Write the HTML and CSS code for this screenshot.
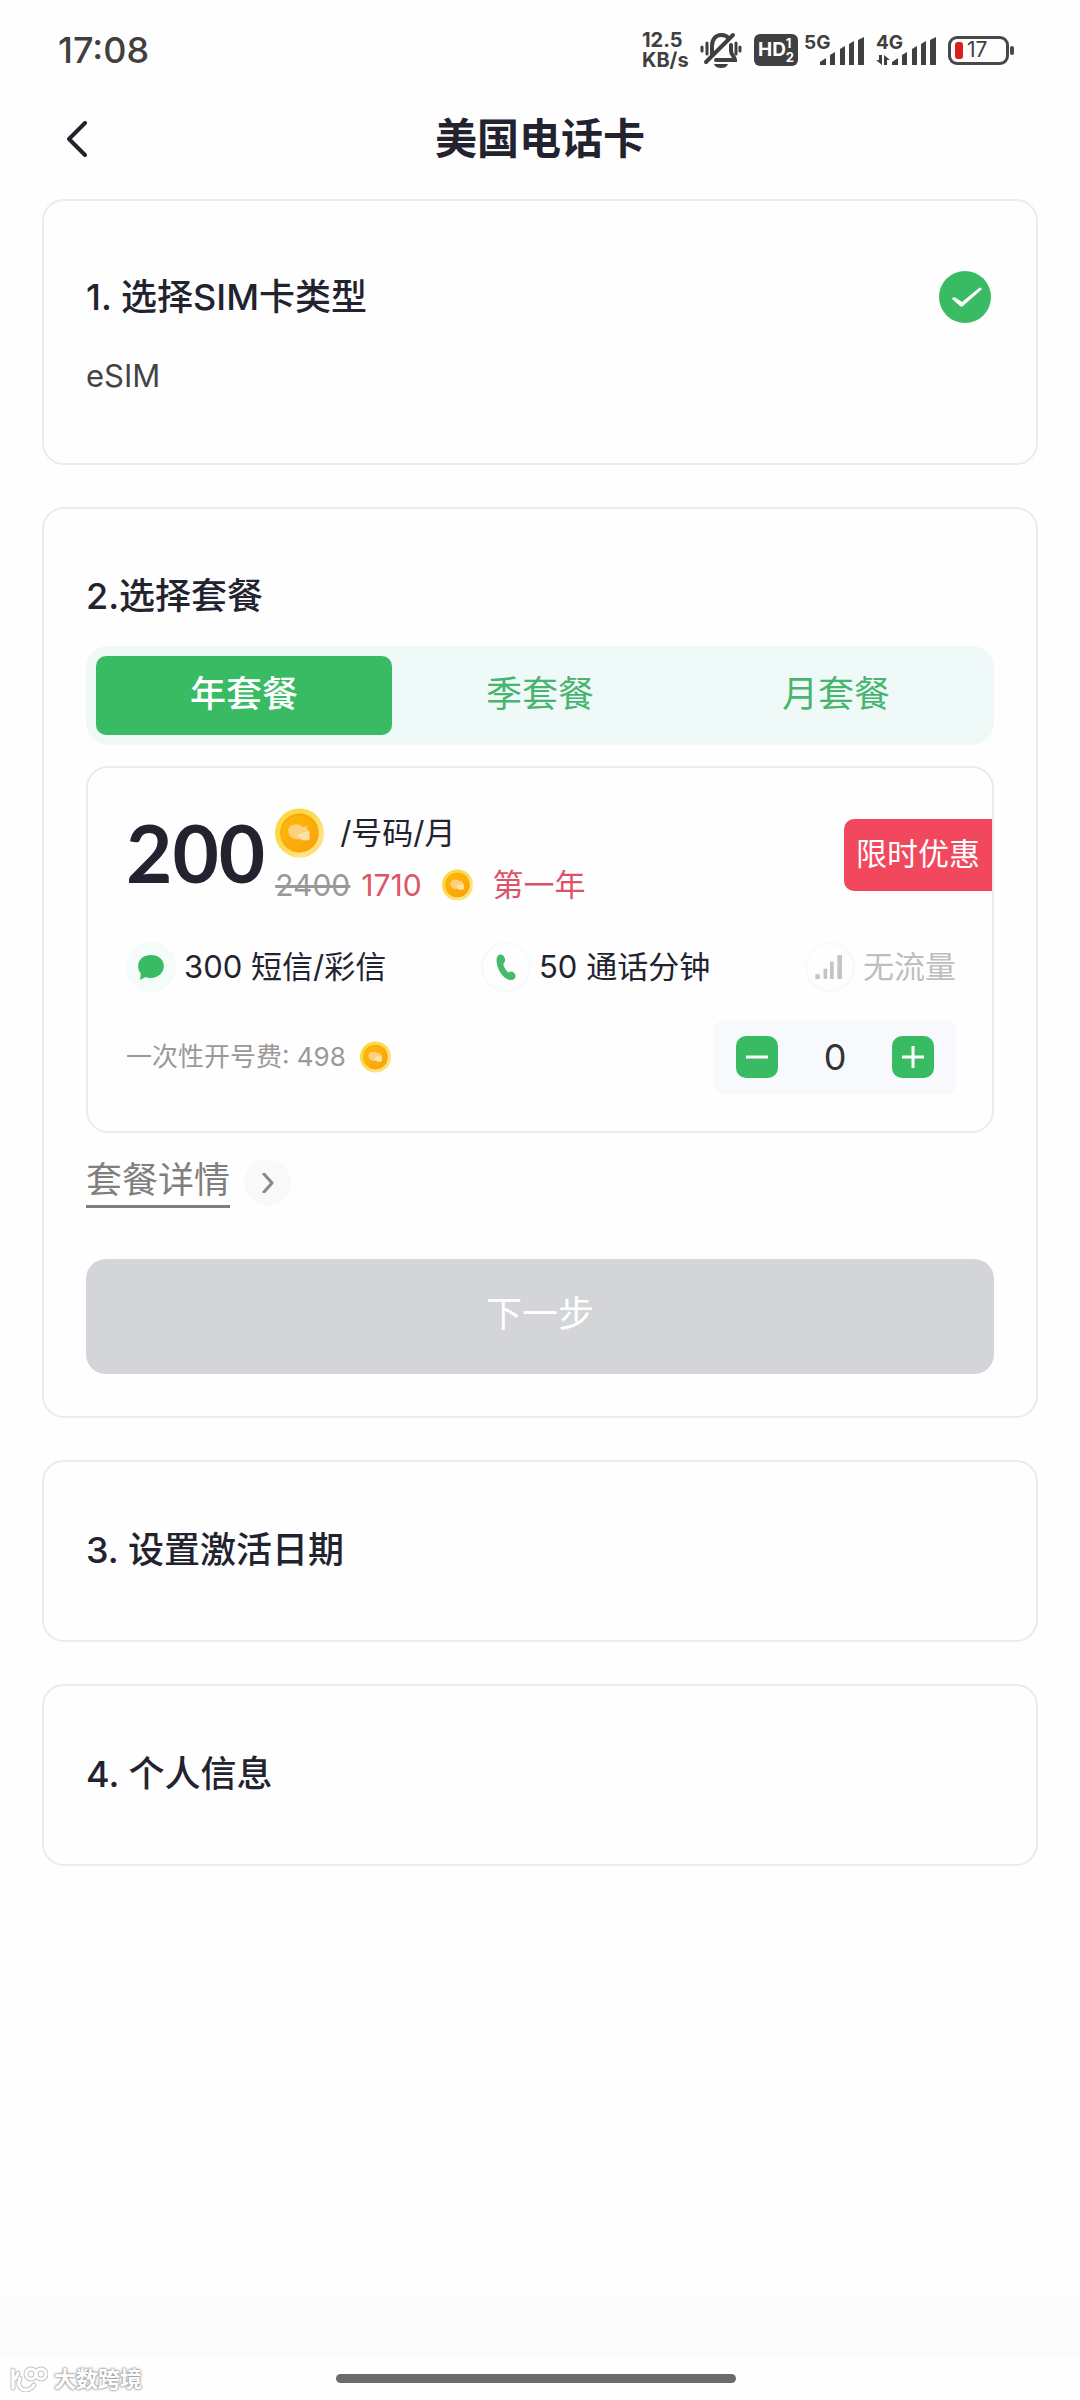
FILE: index.html
```html
<!DOCTYPE html>
<html lang="zh-CN">
<head>
<meta charset="utf-8">
<meta name="viewport" content="width=device-width, initial-scale=1">
<title>美国电话卡</title>
<link rel="stylesheet" href="styles.css">
</head>
<body>
<svg class="defs" aria-hidden="true">
  <defs>
    <linearGradient id="rim" x1="0" y1="0" x2="1" y2="1">
      <stop offset="0" stop-color="#fcd535"/><stop offset=".5" stop-color="#fbdc55"/><stop offset=".75" stop-color="#fce58a"/><stop offset="1" stop-color="#fdd23a"/>
    </linearGradient>
    <linearGradient id="face" x1="0" y1="0" x2="1" y2="1">
      <stop offset="0" stop-color="#feb908"/><stop offset="1" stop-color="#f9a00c"/>
    </linearGradient>
    <symbol id="coin" viewBox="0 0 48 48">
      <circle cx="24" cy="24" r="24" fill="url(#rim)"/>
      <circle cx="24" cy="24" r="19" fill="#f8a80c"/>
      <circle cx="24" cy="25" r="18" fill="url(#face)"/>
      <path d="M13 22c0-5 5-7 10-6 2 0 3 1 4 2l5-1-1 3 2 1c2 3 1 5 0 6l1 3-4 1c-2 1-4 0-5-1-6 1-12-2-12-8z" fill="#fcd07c"/>
      <path d="M22 26c2-2 5-3 11-3-1 3 2 4 1 7-4 2-8 2-12-4z" fill="#fde2a4"/>
    </symbol>
  </defs>
</svg>

<div class="screen">
  <div class="statusbar">
    <span class="clock">17:08</span>
    <div class="indicators">
      <div class="speed"><span>12.5</span><span>KB/s</span></div>
      <svg class="bell" viewBox="0 0 42 38" fill="none" stroke="#404040" stroke-width="4" stroke-linecap="round">
        <path d="M12 24V15c0-7 4-11 9-11 3 0 6 1 7 3M31 14v6c0 4 4 6 4 9H16M6 31 33 4"/>
        <path d="M2 16v4M7 12v11M36 12v11M40 16v4" stroke-width="3"/>
        <path d="M14 33h14c-1 3-4 4-7 4s-6-1-7-4z" fill="#404040" stroke="none"/>
      </svg>
      <span class="hd">HD<span class="hd-sims"><span>1</span><span>2</span></span></span>
      <span class="signal">
        <span class="net">5G</span>
        <svg class="bars" viewBox="0 0 44 28" fill="#404040"><path d="M0 28v-3l6-4v7zM10 28V18l5-3v13zM20 28V12l5-3v19zM29 28V7l5-3v24zM38 28V3l6-3v28z"/></svg>
      </span>
      <span class="signal">
        <span class="net">4G</span>
        <svg class="arrows" viewBox="0 0 14 10" fill="#404040"><path d="M3 0h3v10L0 5h3zM8 0l6 5h-3v5H8z"/></svg>
        <svg class="bars" viewBox="0 0 44 28" fill="#404040"><path d="M0 28v-3l6-4v7zM10 28V18l5-3v13zM20 28V12l5-3v19zM29 28V7l5-3v24zM38 28V3l6-3v28z"/></svg>
      </span>
      <span class="battery"><span class="charge"></span>17</span>
    </div>
  </div>

  <header class="topbar">
    <button class="back" type="button" aria-label="返回">
      <svg viewBox="0 0 20 36" fill="none" stroke="#23232f" stroke-width="4" stroke-linecap="round" stroke-linejoin="round"><path d="M18 2 2 18l16 16"/></svg>
    </button>
    <h1>美国电话卡</h1>
  </header>

  <main class="steps">
    <section class="card sim">
      <div class="sim-head">
        <h2>1. 选择SIM卡类型</h2>
        <svg class="done" viewBox="0 0 52 52" role="img" aria-label="已完成">
          <circle cx="26" cy="26" r="26" fill="#38bb63"/>
          <path d="M13 28c1-2 2-2 4-1l6 4L40 17c2-1 4 1 2 2L24 35c-1 1-2 1-3 0z" fill="#fff"/>
        </svg>
      </div>
      <p>eSIM</p>
    </section>

    <section class="card plans">
      <h2>2.选择套餐</h2>
      <div class="tabs" role="tablist">
        <button class="tab active" type="button" role="tab" aria-selected="true">年套餐</button>
        <button class="tab" type="button" role="tab" aria-selected="false">季套餐</button>
        <button class="tab" type="button" role="tab" aria-selected="false">月套餐</button>
      </div>

      <article class="plan">
        <div class="price-row">
          <strong class="price">200</strong>
          <div class="price-notes">
            <div class="unit"><svg class="coin-lg"><use href="#coin"/></svg><span>/号码/月</span></div>
            <div class="offer"><s>2400</s><span>1710</span><svg class="coin-sm"><use href="#coin"/></svg><span class="term">第一年</span></div>
          </div>
          <span class="promo">限时优惠</span>
        </div>
        <ul class="features">
          <li>
            <svg class="feature-icon tinted" viewBox="0 0 50 50"><path d="M25 12c8 0 14 5 14 12s-6 13-14 13c-2 0-4 0-6-1l-6 3 1-7c-2-2-3-4-3-8 0-7 6-12 14-12z" fill="#38bb63"/></svg>
            300 短信/彩信
          </li>
          <li>
            <svg class="feature-icon" viewBox="0 0 50 50"><path d="M15 15c1-4 6-5 8-1 2 3 1 5-1 8 1 4 3 7 6 9 3-2 5-1 7 2 1 3 0 5-3 6-9 2-19-13-17-24z" fill="#45bb6c"/></svg>
            50 通话分钟
          </li>
          <li class="muted">
            <svg class="feature-icon" viewBox="0 0 50 50" fill="#c2c4c5"><path d="M9 33h5v5H9zM18 27h4v11h-4zM25 19h4v19h-4zM33 12h5v26h-5z"/></svg>
            无流量
          </li>
        </ul>
        <div class="fee-row">
          <span class="fee">一次性开号费: 498</span>
          <svg class="coin-sm"><use href="#coin"/></svg>
          <div class="stepper">
            <button type="button" aria-label="减少"><svg viewBox="0 0 22 22" stroke="#fff" stroke-width="3"><path d="M0 11h22"/></svg></button>
            <output>0</output>
            <button type="button" aria-label="增加"><svg viewBox="0 0 22 22" stroke="#fff" stroke-width="3"><path d="M0 11h22M11 0v22"/></svg></button>
          </div>
        </div>
      </article>

      <a class="details" href="#details">
        <span class="details-label">套餐详情</span>
        <span class="details-arrow"><svg viewBox="0 0 12 20" fill="none" stroke="#888" stroke-width="3" stroke-linecap="round" stroke-linejoin="round"><path d="m2 1 8 9-8 9"/></svg></span>
      </a>
      <button class="next" type="button">下一步</button>
    </section>

    <section class="card pending"><h2>3. 设置激活日期</h2></section>
    <section class="card pending"><h2>4. 个人信息</h2></section>
  </main>

  <div class="bottom-strip"></div>
  <footer class="navbar">
    <div class="watermark">
      <svg viewBox="0 0 38 26" fill="none" stroke-linecap="round">
        <g stroke="#c4c4c4" stroke-width="5"><path d="M3 4v18M3 14c3-1 4-3 5-7M10 12c-3 7 0 12 6 12 4 0 6-2 8-5"/><circle cx="21" cy="8" r="5"/><circle cx="31" cy="8" r="5"/></g>
        <g stroke="#fff" stroke-width="3"><path d="M3 4v18M3 14c3-1 4-3 5-7M10 12c-3 7 0 12 6 12 4 0 6-2 8-5"/><circle cx="21" cy="8" r="5"/><circle cx="31" cy="8" r="5"/></g>
      </svg>
      <span>大数跨境</span>
    </div>
    <div class="home-indicator"></div>
  </footer>
</div>
</body>
</html>
```
FILE: styles.css
```css
* { box-sizing: border-box; }

body {
  margin: 0;
  background: #fefefe;
  color: #23232f;
  font-family: Inter, "Noto Sans CJK SC", sans-serif;
  font-size: 31px;
  line-height: 40px;
}

h1, h2, p, ul { margin: 0; padding: 0; }
button { border: 0; padding: 0; font: inherit; background: none; }
svg { display: block; flex: none; }
.defs { position: absolute; width: 0; height: 0; }

.screen { display: flex; flex-direction: column; min-height: 100vh; }

/* Status bar */
.statusbar {
  display: flex;
  justify-content: space-between;
  align-items: center;
  height: 100px;
  padding: 0 66px 0 58px;
  color: #404040;
}
.clock { font-size: 36px; font-weight: 500; }
.indicators { display: flex; align-items: center; }
.speed { display: grid; width: 58px; font-size: 20px; font-weight: 700; line-height: 20px; }
.bell { width: 42px; height: 38px; }
.hd {
  display: flex;
  align-items: center;
  justify-content: center;
  width: 44px;
  height: 32px;
  margin: 0 6px 0 12px;
  border-radius: 6px;
  background: #404040;
  color: #fff;
  font-size: 19px;
  font-weight: 700;
}
.hd-sims { display: grid; font-size: 13px; line-height: 14px; }
.signal { position: relative; width: 60px; height: 30px; margin-right: 12px; }
.net { position: absolute; left: 0; top: 0; font-size: 19px; font-weight: 700; line-height: 16px; }
.bars { position: absolute; right: 0; bottom: 0; width: 44px; height: 28px; }
.arrows { position: absolute; left: 0; bottom: 0; width: 14px; height: 10px; }
.battery {
  position: relative;
  display: flex;
  align-items: center;
  gap: 4px;
  width: 61px;
  height: 29px;
  margin-right: 5px;
  padding-left: 4px;
  border: 3px solid #48484c;
  border-radius: 9px;
  font-size: 21px;
}
.battery::after {
  content: "";
  position: absolute;
  right: -8px;
  top: 7px;
  width: 4px;
  height: 9px;
  border-radius: 2px;
  background: #48484c;
}
.charge { width: 8px; height: 17px; border-radius: 3px; background: #d81e1e; }

/* Title bar */
.topbar {
  display: grid;
  grid-template-columns: 100px 1fr 100px;
  align-items: center;
  height: 77px;
  margin-bottom: 22px;
}
.back { padding-left: 67px; }
.back svg { width: 20px; height: 36px; }
h1 { font-size: 42px; font-weight: 600; line-height: 60px; text-align: center; }
h2 { font-size: 36px; font-weight: 500; line-height: 52px; }

/* Step cards */
.steps { display: flex; flex-direction: column; gap: 42px; padding: 0 42px; }
.card { padding: 0 42px; border: 2px solid #ebebeb; border-radius: 22px; }
.sim { padding-top: 70px; padding-bottom: 66px; }
.sim-head { display: flex; justify-content: space-between; align-items: center; margin-bottom: 32px; padding-right: 3px; }
.sim p { color: #444; font-size: 31px; line-height: 42px; }
.done { width: 52px; height: 52px; }
.pending { padding-top: 62px; padding-bottom: 64px; }
.plans { padding-top: 61px; padding-bottom: 42px; }

.tabs {
  display: grid;
  grid-template-columns: repeat(3, 1fr);
  margin: 24px 0 21px;
  padding: 10px;
  border-radius: 22px;
  background: #eff9f8;
}
.tab { height: 79px; padding-bottom: 4px; border-radius: 10px; color: #48b56e; font-size: 36px; }
.tab.active { background: #38bb63; color: #fff; font-weight: 500; }

.plan { padding: 38px 36px 37px 38px; border: 2px solid #ebebeb; border-radius: 22px; }
.price-row { display: flex; align-items: flex-start; height: 98px; margin-right: -36px; }
.price { margin-top: 6px; font-family: Lato, sans-serif; font-size: 80px; font-weight: 700; line-height: 80px; }
.price-notes { margin-left: 10px; }
.unit { display: flex; align-items: center; gap: 16px; height: 53px; }
.offer { display: flex; align-items: center; height: 52px; color: #dd5368; font-size: 30px; }
.offer s { margin-right: 11px; color: #999; }
.offer .term { font-size: 31px; }
.offer .coin-sm { margin: 0 20px; }
.coin-lg { width: 49px; height: 50px; }
.coin-sm { width: 31px; height: 32px; }
.promo {
  margin: 13px 0 0 auto;
  padding: 15px 12px 17px;
  border-radius: 10px 0 0 10px;
  background: #f1485d;
  color: #fff;
}

.features { display: flex; justify-content: space-between; margin-top: 38px; list-style: none; }
.features li { display: flex; align-items: center; gap: 8px; height: 50px; }
.features .muted { color: #bcbec0; }
.feature-icon { width: 50px; height: 50px; border: 2px solid #f5fafa; border-radius: 50%; }
.feature-icon.tinted { background: #f4fcfa; }

.fee-row { display: flex; align-items: center; margin-top: 28px; }
.fee { color: #999; font-size: 26px; }
.fee-row .coin-sm { margin-left: 14px; }
.stepper {
  display: flex;
  justify-content: space-between;
  align-items: center;
  width: 242px;
  height: 74px;
  margin-left: auto;
  padding: 0 22px;
  border-radius: 10px;
  background: #f8f9fc;
}
.stepper button { display: grid; place-items: center; width: 42px; height: 42px; border-radius: 10px; background: #38bb63; }
.stepper svg { width: 22px; height: 22px; }
.stepper output { color: #333; font-size: 36px; }

.details { display: flex; align-items: center; gap: 14px; width: max-content; margin-top: 24px; color: #7f7f7f; text-decoration: none; }
.details-label { padding-bottom: 2px; border-bottom: 3px solid #7f7f7f; font-size: 36px; line-height: 46px; }
.details-arrow { display: grid; place-items: center; width: 47px; height: 47px; border-radius: 50%; background: #f8f9fb; }
.details-arrow svg { width: 12px; height: 20px; }

.next {
  width: 100%;
  height: 115px;
  margin-top: 51px;
  padding-bottom: 6px;
  border-radius: 20px;
  background: #d4d5d8;
  color: #fff;
  font-size: 36px;
}

/* Bottom of the screen */
.bottom-strip { height: 62px; margin-top: auto; background: #fbfbfb; }
.navbar { display: grid; grid-template-columns: 1fr 400px 1fr; align-items: center; height: 43px; padding-right: 8px; }
.watermark {
  display: flex;
  align-items: center;
  gap: 6px;
  padding-left: 10px;
  color: #fff;
  font-size: 22px;
  line-height: 24px;
  font-weight: 700;
  text-shadow: 0 0 2px #999, 0 0 2px #999, 0 0 3px #aaa;
}
.watermark svg { width: 38px; height: 26px; }
.home-indicator { height: 9px; border-radius: 5px; background: #6b6b6b; }
```
